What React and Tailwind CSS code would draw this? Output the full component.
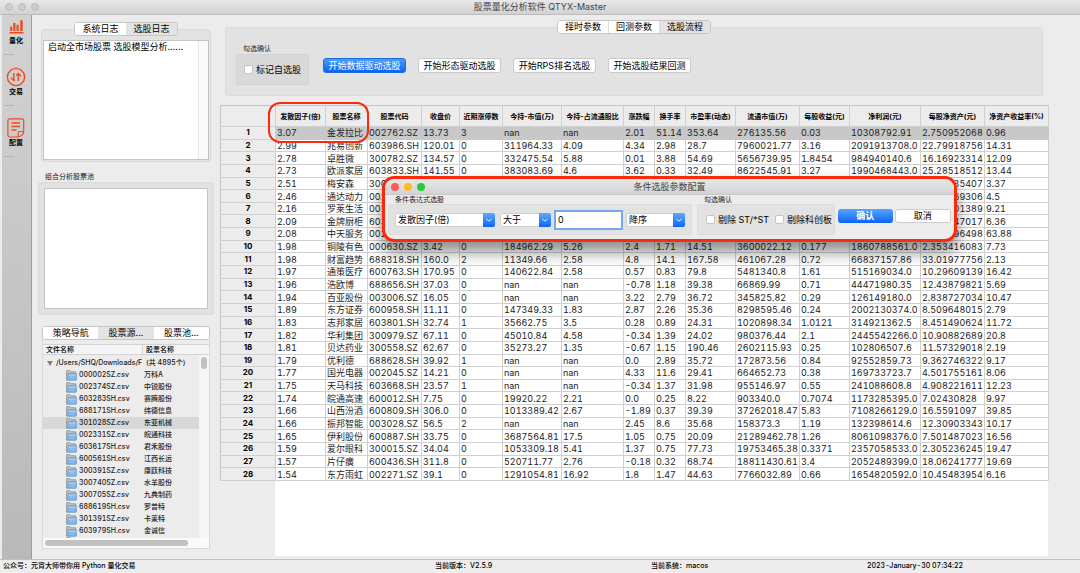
import React from "react";

const columns = [
  ["发散因子(倍)", 50],
  ["股票名称", 42],
  ["股票代码", 54],
  ["收盘价", 38],
  ["近期涨停数", 43],
  ["今持-市值(万)", 59],
  ["今持-占流通股比", 62],
  ["涨跌幅", 31],
  ["换手率", 31],
  ["市盈率(动态)", 50],
  ["流通市值(万)", 64],
  ["每股收益(元)", 50],
  ["净利润(元)", 71],
  ["每股净资产(元)", 64],
  ["净资产收益率(%)", 64],
];

const rows = `3.07|金发拉比|002762.SZ|13.73|3|nan|nan|2.01|51.14|353.64|276135.56|0.03|10308792.91|2.750952068|0.96
2.99|兆易创新|603986.SH|120.01|0|311964.33|4.09|4.34|2.98|28.7|7960021.77|3.16|2091913708.0|22.79918756|14.31
2.78|卓胜微|300782.SZ|134.57|0|332475.54|5.88|0.01|3.88|54.69|5656739.95|1.8454|984940140.6|16.16923314|12.09
2.73|欧派家居|603833.SH|141.55|0|383083.69|4.6|3.62|0.33|32.49|8622545.91|3.27|1990468443.0|25.28518512|13.44
2.51|梅安森|300275.SZ|||||||||||4.120135407|3.37
2.46|通达动力|002576.SZ|||||||||||6.318569306|4.5
2.16|罗莱生活|002293.SZ|||||||||||4.880701389|9.21
2.09|金牌厨柜|603180.SH|||||||||||16.97247017|6.36
2.08|中天服务|002188.SZ|||||||||||0.390596498|63.88
1.98|铜陵有色|000630.SZ|3.42|0|184962.29|5.26|2.4|1.71|14.51|3600022.12|0.177|1860788561.0|2.353416083|7.73
1.98|财富趋势|688318.SH|160.0|2|11349.66|2.58|4.8|14.1|167.58|461067.28|0.72|66837157.86|33.01977756|2.13
1.97|通策医疗|600763.SH|170.95|0|140622.84|2.58|0.57|0.83|79.8|5481340.8|1.61|515169034.0|10.29609139|16.42
1.96|浩欧博|688656.SH|37.03|0|nan|nan|-0.78|1.18|39.38|66869.99|0.71|44471980.35|12.43879821|5.69
1.94|百亚股份|003006.SZ|16.05|0|nan|nan|3.22|2.79|36.72|345825.82|0.29|126149180.0|2.838727034|10.47
1.89|东方证券|600958.SH|11.11|0|147349.33|1.83|2.87|2.26|35.36|8298595.46|0.24|2002130374.0|8.509648015|2.79
1.83|志邦家居|603801.SH|32.74|1|35662.75|3.5|0.28|0.89|24.31|1020898.34|1.0121|314921362.5|8.451490624|11.72
1.82|华利集团|300979.SZ|67.11|0|45010.84|4.58|-0.34|1.39|24.02|980376.44|2.1|2445542266.0|10.90882689|20.8
1.81|贝达药业|300558.SZ|62.67|0|35273.27|1.35|-0.67|1.15|190.46|2602115.93|0.25|102806507.6|11.57329018|2.19
1.79|优利德|688628.SH|39.92|1|nan|nan|0.0|2.89|35.72|172873.56|0.84|92552859.73|9.362746322|9.17
1.77|国光电器|002045.SZ|14.21|0|nan|nan|4.33|11.6|29.41|664652.73|0.38|169733723.7|4.501755161|8.06
1.75|天马科技|603668.SH|23.57|1|nan|nan|-0.34|1.37|31.98|955146.97|0.55|241088608.8|4.908221611|12.23
1.74|皖通高速|600012.SH|7.75|0|19920.22|2.21|0.0|0.25|8.22|903340.0|0.7074|1173285395.0|7.02430828|9.97
1.66|山西汾酒|600809.SH|306.0|0|1013389.42|2.67|-1.89|0.37|39.39|37262018.47|5.83|7108266129.0|16.5591097|39.85
1.66|振邦智能|003028.SZ|56.5|2|nan|nan|2.45|8.6|35.68|158373.3|1.19|132398614.6|12.30903343|10.17
1.65|伊利股份|600887.SH|33.75|0|3687564.81|17.5|1.05|0.75|20.09|21289462.78|1.26|8061098376.0|7.501487023|16.56
1.59|爱尔眼科|300015.SZ|34.04|0|1053309.18|5.41|1.37|0.75|77.73|19753465.38|0.3371|2357058533.0|2.305236245|19.47
1.57|片仔癀|600436.SH|311.8|0|520711.77|2.76|-0.18|0.32|68.74|18811430.61|3.4|2052489399.0|18.06241777|19.69
1.54|东方雨虹|002271.SZ|39.1|0|1291054.81|16.92|1.8|1.47|44.63|7766032.89|0.66|1654820592.0|10.45483954|6.16`
  .split("\n")
  .map((line) => line.split("|"));

const files = [
  ["000002SZ.csv", "万科A"],
  ["002374SZ.csv", "中锐股份"],
  ["603283SH.csv", "赛腾股份"],
  ["688171SH.csv", "纬德信息"],
  ["301028SZ.csv", "东亚机械"],
  ["002331SZ.csv", "皖通科技"],
  ["603617SH.csv", "君禾股份"],
  ["600561SH.csv", "江西长运"],
  ["300391SZ.csv", "康跃科技"],
  ["300740SZ.csv", "水羊股份"],
  ["300705SZ.csv", "九典制药"],
  ["688619SH.csv", "罗普特"],
  ["301391SZ.csv", "卡莱特"],
  ["603979SH.csv", "金诚信"],
];

function Tabs({ items, selected, className, tone = "gray" }) {
  return (
    <div role="tablist" className={`flex h-[14px] overflow-hidden rounded-[3px] border border-[#c6c6c6] bg-white text-[9px] leading-3 ${className}`}>
      {items.map((item, i) => (
        <button
          key={item}
          type="button"
          role="tab"
          aria-selected={i === selected}
          className={`flex-1 whitespace-nowrap ${i === selected ? "bg-[#e3e3e3]" : "bg-white"} ${i > 0 && tone === "line" ? "border-l border-[#dedede]" : ""}`}
        >
          {item}
        </button>
      ))}
    </div>
  );
}

function Check({ label }) {
  return (
    <label className="flex items-center gap-[3px] whitespace-nowrap text-[9px] leading-3">
      <input type="checkbox" className="size-[9px] shrink-0 appearance-none rounded-[2px] border border-[#c4c4c4] bg-white checked:bg-[#1a73f5]" />
      {label}
    </label>
  );
}

function Combo({ label, options, className }) {
  return (
    <div className={`relative h-[14px] ${className}`}>
      <select aria-label={label} className="block h-full w-full appearance-none rounded-[2px] border border-[#cfcfcf] bg-white pl-[2px] text-[9px] leading-3">
        {options.map((o) => (
          <option key={o}>{o}</option>
        ))}
      </select>
      <svg viewBox="0 0 12 14" className="pointer-events-none absolute right-0 top-0 h-[14px] w-3">
        <defs>
          <linearGradient id="arrowBlue" x1="0" y1="0" x2="0" y2="1">
            <stop offset="0" stopColor="#62a9fb" />
            <stop offset="1" stopColor="#0a66f7" />
          </linearGradient>
        </defs>
        <path d="M0 0H10Q12 0 12 2V12Q12 14 10 14H0Z" fill="url(#arrowBlue)" />
        <path d="M3.8 6.2L6 8.2L8.2 6.2" fill="none" stroke="#fff" strokeWidth="0.9" strokeLinecap="round" strokeLinejoin="round" />
      </svg>
    </div>
  );
}

function Folder() {
  return (
    <svg viewBox="0 0 11 11" className="size-[11px] shrink-0">
      <path d="M0.5 10V1.2Q0.5 0.6 1.1 0.6H4L5 1.7H9.6V4" fill="#c9c3bb" stroke="#8b8782" strokeWidth="0.7" />
      <path d="M1.9 3.4H10.4V9.4Q10.4 10.3 9.6 10.3H0.8Q1.7 10 1.9 9Z" fill="#86b8e8" stroke="#5a92c8" strokeWidth="0.7" />
      <path d="M2.6 4.3H9.8V6.2H2.4Z" fill="#9fc8ef" />
    </svg>
  );
}

function BarsIcon() {
  return (
    <svg viewBox="0 0 15 15" className="size-[15px]" fill="#f04a20">
      <path d="M1.2 7.500h2V12h-2zM4.200 4h2.300v8H4.200zM7.500 5.800h2.200V12H7.500zM11.200 1.200h2.500V12h-2.500zM0.500 13h14v1.400H0.500z" />
    </svg>
  );
}

function TradeIcon() {
  return (
    <svg viewBox="0 0 20 20" className="size-5" fill="none" stroke="#f04a20" strokeWidth="1.400">
      <circle cx="10" cy="10" r="8.600" strokeWidth="1.400" />
      <path d="M7.800 6V13.500M5 10.800L7.800 13.600L8.800 12.600" />
      <path d="M12.200 14V6.500M15 9.200L12.200 6.400L10.200 8.400" />
    </svg>
  );
}

function NoteIcon() {
  return (
    <svg viewBox="0 0 18 20" className="h-5 w-[18px]" fill="none" stroke="#f04a20" strokeWidth="1.200">
      <path d="M16.700 12.800V2.600Q16.700 0.900 15 0.900H2.600Q0.900 0.900 0.900 2.600V17.200Q0.900 19 2.600 19H11.200" />
      <path d="M11.200 19V15Q11.200 13.500 12.700 13.500H16.700Q16.300 17.700 11.200 19Z" />
      <path d="M4.500 5H13M4.500 8.500H13M4.500 12H9.500" strokeWidth="1.400" />
    </svg>
  );
}

function ToolItem({ icon, label }) {
  return (
    <button type="button" className="flex h-[51px] w-full flex-col items-center">
      <span className="flex h-5 items-center">{icon}</span>
      <span className="text-[7px] font-bold leading-[9px]">{label}</span>
      <span className="mt-[9px] ml-[2px] h-px w-[10px] self-start bg-[#b4b4b4]" />
    </button>
  );
}

function Sidebar() {
  return (
    <nav className="ml-[2px] flex w-[30px] shrink-0 flex-col border-r border-[#9d9d9d] bg-linear-to-b from-[#d2d2d2] to-[#b9b9b9] pt-px pr-px">
      <ToolItem icon={<BarsIcon />} label="量化" />
      <ToolItem icon={<TradeIcon />} label="交易" />
      <ToolItem icon={<NoteIcon />} label="配置" />
    </nav>
  );
}

function LeftPanel() {
  return (
    <aside className="flex w-[188px] shrink-0 flex-col px-[6px] pt-[7px]">
      <div className="mx-[3px] flex flex-col">
        <Tabs items={["系统日志", "选股日志"]} selected={1} className="relative z-10 w-[104px] self-center" />
        <div className="-mt-[7px] rounded-[3px] border border-[#dadada] bg-[#e3e3e3] px-px pb-px pt-[10px]">
          <div className="flex h-[120px] border border-[#c4c4c4] bg-white">
            <textarea
              aria-label="系统日志"
              readOnly
              defaultValue="启动全市场股票 选股模型分析......"
              className="block min-w-0 flex-1 resize-none overflow-hidden px-1 text-[9px] leading-3 outline-none"
            />
            <div className="w-[10px] border-l border-[#ebebeb] bg-[#fafafa]" />
          </div>
        </div>
      </div>

      <h2 className="ml-[7px] mt-[10px] text-[7px] leading-[10px] text-[#222]">组合分析股票池</h2>
      <div className="rounded-[3px] border border-[#dadada] bg-[#e2e2e2] p-[5px]">
        <div className="h-[121px] border border-[#c4c4c4] bg-white" />
      </div>

      <div className="mx-1 mt-[11px] mb-[10px] flex min-h-0 flex-1 flex-col">
        <Tabs items={["策略导航", "股票源...", "股票池..."]} selected={1} className="relative z-10 shrink-0" />
        <div className="-mt-[7px] flex min-h-0 flex-1 flex-col border border-[#dadada] bg-[#ececec] pt-[10px]">
          <div className="flex h-[11px] shrink-0 border-y border-[#d3d3d3] bg-[#f4f4f4] text-[7px] font-medium leading-[9px]">
            <span className="w-[100px] border-r border-[#cfcfcf] pl-[3px]">文件名称</span>
            <span className="flex-1 pl-[3px]">股票名称</span>
          </div>
          <div className="flex min-h-0 flex-1">
            <ul className="min-w-0 flex-1 overflow-hidden pt-[2px] text-[7px] font-medium leading-3 text-[#222] tabular-nums">
              <li className="flex h-3 items-center">
                <svg viewBox="0 0 6 5" className="ml-1 h-[5px] w-[6px] shrink-0">
                  <path d="M0 0H6L3 5Z" fill="#808080" />
                </svg>
                <span className="ml-[3px] w-[87px] shrink-0 whitespace-nowrap">/Users/SHQ/Downloads/F</span>
                <span className="ml-[3px] whitespace-nowrap">(共 4895个)</span>
              </li>
              {files.map(([file, name], i) => (
                <li key={file} className={`flex h-3 items-center ${i === 4 ? "bg-[#d8d8d8]" : ""}`}>
                  <span className="w-[23px] shrink-0" />
                  <Folder />
                  <span className="ml-[2px] w-[65px] shrink-0">{file}</span>
                  <span className="whitespace-nowrap">{name}</span>
                </li>
              ))}
              <li className="flex h-3">
                <span className="w-[23px] shrink-0" />
                <Folder />
              </li>
            </ul>
            <div className="w-[10px] shrink-0 bg-[#f6f6f6] p-[2px]">
              <div className="h-3 rounded-full bg-[#c1c1c1]" />
            </div>
          </div>
          <div className="h-[10px] shrink-0 bg-[#fafafa] p-[2px]">
            <div className="h-[6px] w-[143px] rounded-full bg-[#c1c1c1]" />
          </div>
        </div>
      </div>
    </aside>
  );
}

const actions = ["开始数据驱动选股", "开始形态驱动选股", "开始RPS排名选股", "开始选股结果回测"];

function StrategyPanel() {
  return (
    <section className="mx-[5px] flex flex-col">
      <Tabs items={["择时参数", "回测参数", "选股流程"]} selected={2} tone="line" className="relative z-10 w-[154px] self-center" />
      <div className="-mt-[7px] flex h-[69px] gap-[14px] rounded-[3px] border border-[#dcdcdc] bg-[#e2e2e2] pl-[10px] pt-4">
        <fieldset className="flex w-[73px] flex-col">
          <legend className="ml-[7px] h-[10px] text-[7px] leading-[10px] text-[#222]">勾选确认</legend>
          <div className="flex h-[31px] items-center rounded-[2px] border border-[#d2d2d2] bg-[#d9d9d9] pl-[7px]">
            <Check label="标记自选股" />
          </div>
        </fieldset>
        <div className="mt-[14px] flex gap-3">
          {actions.map((a, i) => (
            <button
              key={a}
              type="button"
              className={`h-[15px] w-[83px] whitespace-nowrap rounded-[3px] border text-[9px] leading-3 ${
                i === 0 ? "border-[#1a6ae6] bg-linear-to-b from-[#4b9bfa] to-[#0a62f2] text-white" : "border-[#c9c9c9] bg-white"
              }`}
            >
              {a}
            </button>
          ))}
        </div>
      </div>
    </section>
  );
}

function StockTable() {
  return (
    <div className="mt-[9px] min-h-0 flex-1 bg-linear-to-r from-[#ececec] from-[55px] to-white to-[55px]">
      <table className="h-[376px] w-full table-fixed border-collapse border-l border-t border-[#c4c4c4] text-left">
        <colgroup>
          <col width="55" />
          {columns.map(([name, width]) => (
            <col key={name} width={width} />
          ))}
        </colgroup>
        <thead>
          <tr className="h-[21px] bg-[#ececec] text-center text-[7px] leading-[9px]">
            <th aria-label="序号" className="border-b border-r border-[#d0d0d0] p-0" />
            {columns.map(([name]) => (
              <th key={name} scope="col" className="whitespace-nowrap border-b border-r border-[#d0d0d0] p-0 font-bold">
                {name}
              </th>
            ))}
          </tr>
        </thead>
        <tbody>
          {rows.map((row, i) => (
            <tr key={row[2]} className={i === 0 ? "bg-[#c8c8c8]" : "bg-white"}>
              <th scope="row" className="border-b border-r border-[#d0d0d0] bg-[#ececec] p-0 text-center text-[8px] font-bold leading-[11px]">
                {i + 1}
              </th>
              {row.map((cell, j) => (
                <td key={j} className={`whitespace-nowrap border-b border-r py-0 pl-px pr-0 text-[9px] leading-[11px] text-[#1d1d1d] tabular-nums ${i === 0 ? "border-[#c8c8c8]" : "border-[#d0d0d0]"}`}>
                  {cell}
                </td>
              ))}
            </tr>
          ))}
        </tbody>
      </table>
    </div>
  );
}

function FilterDialog() {
  return (
    <div
      role="dialog"
      aria-label="条件选股参数配置"
      className="absolute left-[382px] top-[176px] z-20 w-[575px] overflow-hidden rounded-[12px] border-[3px] border-[#f92b0b] bg-[#ececec] pb-1 shadow-[0_10px_16px_rgba(0,0,0,0.45)]"
    >
      <header className="relative flex h-4 items-center justify-center border-b border-[#c8c8c8] bg-linear-to-b from-[#e9e9e9] to-[#d3d3d3] text-[9px] leading-3 text-[#444]">
        <div className="absolute left-[6px] flex gap-[5px]">
          <button type="button" aria-label="关闭" className="size-2 rounded-full bg-[#fc5b57]" />
          <button type="button" aria-label="最小化" className="size-2 rounded-full bg-[#fdb92e]" />
          <button type="button" aria-label="缩放" className="size-2 rounded-full bg-[#28c840]" />
        </div>
        条件选股参数配置
      </header>
      <div className="flex gap-[5px] px-[3px]">
        <fieldset className="w-[304px] shrink-0">
          <legend className="ml-[7px] h-[9px] text-[7px] leading-[9px] text-[#222]">条件表达式选股</legend>
          <div className="flex h-[31px] items-center gap-[3px] rounded-[2px] border border-[#dcdcdc] bg-[#e2e2e2] pl-[6px]">
            <Combo label="选股因子" options={["发散因子(倍)"]} className="w-[100px]" />
            <Combo label="比较" options={["大于", "小于"]} className="ml-[2px] w-[51px]" />
            <input aria-label="数值" defaultValue="0" className="h-5 w-[69px] border-2 border-[#76a7e9] bg-white px-[2px] text-[9px] leading-3 outline-none" />
            <Combo label="排序" options={["降序", "升序"]} className="w-[59px]" />
          </div>
        </fieldset>
        <fieldset className="w-[138px] shrink-0">
          <legend className="ml-[7px] h-[9px] text-[7px] leading-[9px] text-[#222]">勾选确认</legend>
          <div className="flex h-[31px] items-center gap-[6px] rounded-[2px] border border-[#dcdcdc] bg-[#e2e2e2] pl-2">
            <Check label="剔除 ST/*ST" />
            <Check label="剔除科创板" />
          </div>
        </fieldset>
        <div className="-ml-[2px] mt-[14px] flex flex-1 gap-[2px] text-[9px] leading-3">
          <button type="button" className="h-[14px] flex-1 rounded-[3px] bg-linear-to-b from-[#57a4fb] to-[#0a62f6] font-bold text-white">
            确认
          </button>
          <button type="button" className="h-[14px] flex-1 rounded-[3px] border border-[#cdcdcd] bg-white">
            取消
          </button>
        </div>
      </div>
    </div>
  );
}

export default function App() {
  return (
    <div className="relative flex h-screen min-w-[1000px] flex-col overflow-hidden bg-[#ececec] font-[Inter,'Noto_Sans_CJK_SC',sans-serif] text-black">
      <header className="relative flex h-[15px] shrink-0 items-center justify-center border-b border-[#bcbcbc] bg-linear-to-b from-[#e8e8e8] to-[#d2d2d2] text-[9px] leading-3 text-[#444]">
        <div className="absolute left-[5px] flex gap-[5px]">
          <button type="button" aria-label="关闭" className="size-2 rounded-full border border-[#bdbdbd] bg-[#cdcdcd]" />
          <button type="button" aria-label="最小化" className="size-2 rounded-full border border-[#bdbdbd] bg-[#cdcdcd]" />
          <button type="button" aria-label="缩放" className="size-2 rounded-full border border-[#bdbdbd] bg-[#cdcdcd]" />
        </div>
        股票量化分析软件 QTYX-Master
      </header>
      <div className="flex min-h-0 flex-1">
        <Sidebar />
        <LeftPanel />
        <main className="mr-8 flex min-w-0 flex-1 flex-col pt-[5px] pb-[3px]">
          <StrategyPanel />
          <StockTable />
        </main>
      </div>
      <footer className="grid h-[14px] shrink-0 grid-cols-5 border-t border-[#c0c0c0] bg-[#ededed] text-[7px] font-medium leading-3 tabular-nums">
        <span className="col-span-2 pl-[3px]">公众号：元宵大师带你用 Python 量化交易</span>
        <span className="pl-[3px]">当前版本：V2.5.9</span>
        <span className="pl-[3px]">当前系统：macos</span>
        <span className="pl-[3px]">2023-January-30 07:34:22</span>
      </footer>
      <div className="pointer-events-none absolute left-[268px] top-[102px] h-[41px] w-[101px] rounded-[12px] border-2 border-[#f92b0b]" />
      <FilterDialog />
    </div>
  );
}
